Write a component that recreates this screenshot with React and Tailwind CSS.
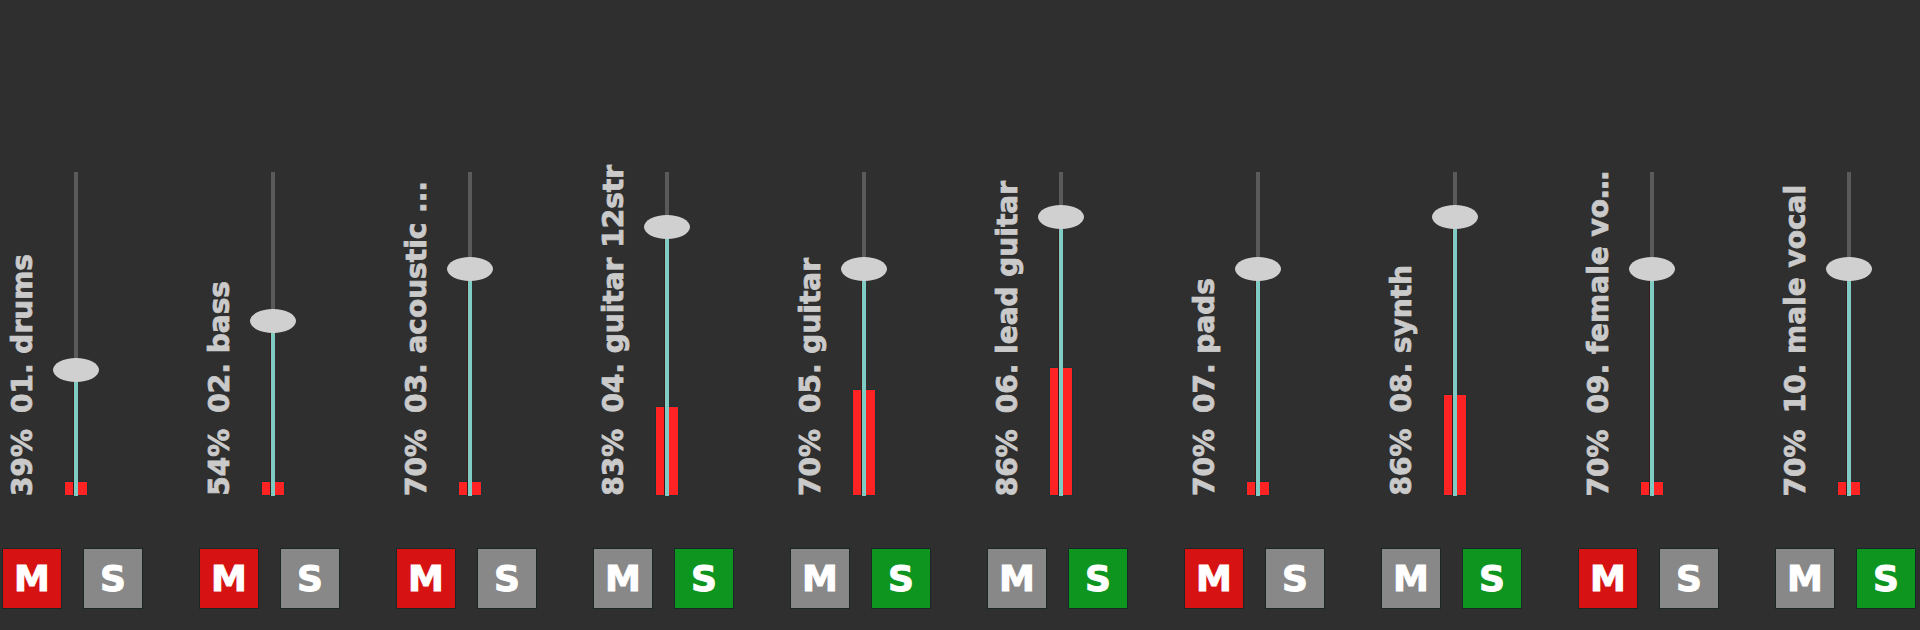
import React from "react";

const tracks = [
  { name: "01. drums", volume: 39, level: 15, mute: true, solo: false },
  { name: "02. bass", volume: 54, level: 15, mute: true, solo: false },
  { name: "03. acoustic ...", volume: 70, level: 15, mute: true, solo: false },
  { name: "04. guitar 12str", volume: 83, level: 90, mute: false, solo: true },
  { name: "05. guitar", volume: 70, level: 107, mute: false, solo: true },
  { name: "06. lead guitar", volume: 86, level: 129, mute: false, solo: true },
  { name: "07. pads", volume: 70, level: 15, mute: true, solo: false },
  { name: "08. synth", volume: 86, level: 102, mute: false, solo: true },
  { name: "09. female vo…", volume: 70, level: 15, mute: true, solo: false },
  { name: "10. male vocal", volume: 70, level: 15, mute: false, solo: true },
];

const font = { fontFamily: '"DejaVu Sans", "Liberation Sans", sans-serif' };

function Fader({ volume, level }) {
  return (
    <div className="relative h-[324px] w-[59px]">
      {/* track */}
      <div className="absolute left-[27.5px] top-0 h-full w-[4px] bg-[#5a5a5a]" />
      {/* meter */}
      <div
        className="absolute bottom-0 left-[17.5px] w-[24px] bg-[#ff2323] border border-[#1d3333]"
        style={{ height: level }}
      />
      {/* filled part of the fader */}
      <div
        className="absolute bottom-0 left-[27px] w-[5px] bg-[#7fccc5] border-l border-[#3a1a1a]"
        style={{ height: `${volume}%` }}
      />
      {/* thumb */}
      <div
        className="absolute left-[6.5px] h-[24px] w-[46px] rounded-[50%] bg-[#d0d0d0]"
        style={{ bottom: `calc(${volume}% - 12px)` }}
      />
    </div>
  );
}

function ToggleButton({ label, on, onColor }) {
  return (
    <div
      className={
        "flex h-[59px] w-[58px] items-center justify-center text-[36px] font-bold text-white ring-1 ring-[#1b2626] [-webkit-text-stroke:1px_#ffffff] " +
        (on ? onColor : "bg-[#888888]")
      }
      style={font}
    >
      {label}
    </div>
  );
}

function Channel({ track }) {
  return (
    <div className="flex w-[197px] shrink-0 flex-col pt-[172px]">
      <div className="flex h-[324px]">
        <div className="flex h-full w-[46px] items-end justify-center">
          <div
            className="rotate-180 whitespace-nowrap text-[28px] font-bold leading-none text-[#cacaca] [writing-mode:vertical-rl] [-webkit-text-stroke:0.8px_#cacaca]"
            style={font}
          >
            <span className="mb-[16px] inline-block">{track.volume}%</span>
            <span>{track.name}</span>
          </div>
        </div>
        <Fader volume={track.volume} level={track.level} />
      </div>
      <div className="mt-[53px] flex gap-[23px] pl-[3px]">
        <ToggleButton label="M" on={track.mute} onColor="bg-[#d61212]" />
        <ToggleButton label="S" on={track.solo} onColor="bg-[#0e951f]" />
      </div>
    </div>
  );
}

export default function App() {
  return (
    <div className="flex h-[630px] w-full overflow-hidden bg-[#2f2f2f]">
      {tracks.map((t) => (
        <Channel key={t.name} track={t} />
      ))}
    </div>
  );
}
